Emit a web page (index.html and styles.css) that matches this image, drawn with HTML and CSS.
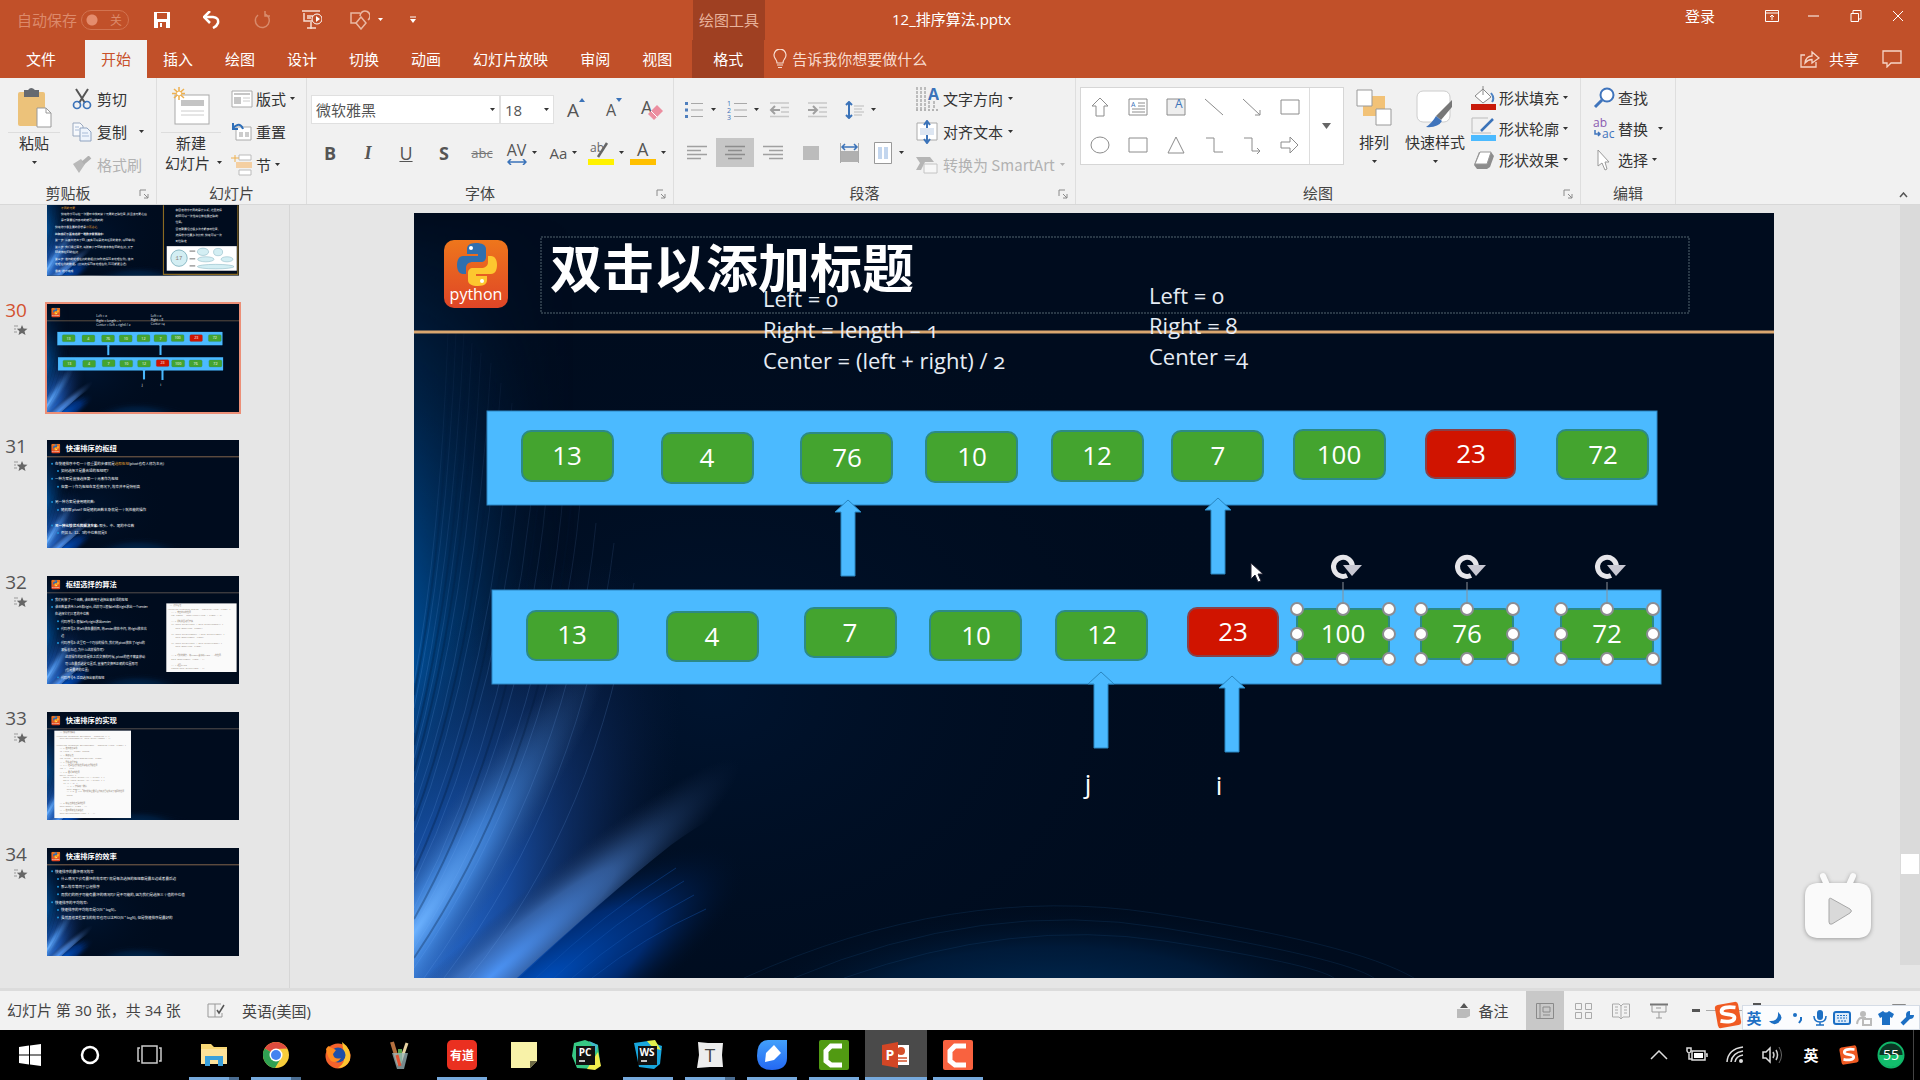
FILE: index.html
```html
<!DOCTYPE html>
<html lang="zh-CN">
<head>
<meta charset="utf-8">
<title>12_排序算法.pptx</title>
<link rel="stylesheet" href="styles.css">
</head>
<body>
<svg class="defs" width="0" height="0" aria-hidden="true">
  <defs>
    <linearGradient id="gLeft" x1="0" x2="1" y1="0" y2="0"><stop offset="0" stop-color="#00509a"/><stop offset=".35" stop-color="#003a74" stop-opacity=".75"/><stop offset="1" stop-color="#000d1f" stop-opacity="0"/></linearGradient>
    <linearGradient id="gFade" x1="0" x2="0" y1="0" y2="1"><stop offset="0" stop-color="#000"/><stop offset=".25" stop-color="#555"/><stop offset=".6" stop-color="#fff"/><stop offset="1" stop-color="#fff"/></linearGradient>
    <radialGradient id="gGlow" gradientUnits="userSpaceOnUse" cx="0" cy="0" r="1" gradientTransform="translate(0 765) rotate(-63) scale(460 185)"><stop offset="0" stop-color="#2c72da"/><stop offset=".35" stop-color="#1a50a8" stop-opacity=".9"/><stop offset=".7" stop-color="#10306a" stop-opacity=".5"/><stop offset="1" stop-color="#0a1c40" stop-opacity="0"/></radialGradient>
    <radialGradient id="gPale" gradientUnits="userSpaceOnUse" cx="0" cy="0" r="1" gradientTransform="translate(0 720) rotate(-56) scale(340 46)"><stop offset="0" stop-color="#6cb2ff"/><stop offset=".4" stop-color="#4a8ee0" stop-opacity=".7"/><stop offset="1" stop-color="#2c4c78" stop-opacity="0"/></radialGradient>
    <radialGradient id="gPale2" gradientUnits="userSpaceOnUse" cx="0" cy="0" r="1" gradientTransform="translate(75 765) rotate(-41) scale(330 44)"><stop offset="0" stop-color="#4c94f6"/><stop offset=".5" stop-color="#4374bd" stop-opacity=".7"/><stop offset="1" stop-color="#1c2f52" stop-opacity="0"/></radialGradient>
    <radialGradient id="gDeep" gradientUnits="userSpaceOnUse" cx="0" cy="0" r="1" gradientTransform="translate(120 775) rotate(-32) scale(250 75)"><stop offset="0" stop-color="#0052c4"/><stop offset=".55" stop-color="#00348a" stop-opacity=".75"/><stop offset="1" stop-color="#000d1f" stop-opacity="0"/></radialGradient>
    <radialGradient id="gArc" gradientUnits="userSpaceOnUse" cx="0" cy="0" r="1" gradientTransform="translate(640 800) scale(330 110)"><stop offset="0" stop-color="#00305c"/><stop offset=".6" stop-color="#002044" stop-opacity=".7"/><stop offset="1" stop-color="#000d1f" stop-opacity="0"/></radialGradient>
    <radialGradient id="gHaze" gradientUnits="userSpaceOnUse" cx="0" cy="0" r="1" gradientTransform="translate(300 480) scale(560 420)"><stop offset="0" stop-color="#001736" stop-opacity=".7"/><stop offset="1" stop-color="#000c1e" stop-opacity="0"/></radialGradient>
    <linearGradient id="gLogo" x1="0" x2="0" y1="0" y2="1"><stop offset="0" stop-color="#ee761c"/><stop offset="1" stop-color="#df4527"/></linearGradient>
    <linearGradient id="gBlue" x1="0" x2="0" y1="0" y2="1"><stop offset="0" stop-color="#42a0fb"/><stop offset="1" stop-color="#2468f2"/></linearGradient>
    <mask id="mFade"><rect width="400" height="765" fill="url(#gFade)"/></mask>
    <clipPath id="cAbove"><path d="M0 765H105Q190 685 257 632Q310 592 400 560V300H0Z"/></clipPath>
    <clipPath id="cBelow"><path d="M103 765Q190 685 257 632Q310 592 400 560V765Z"/></clipPath>
  </defs>

  <symbol id="slide-bg" viewBox="0 0 1360 765">
    <rect width="1360" height="765" fill="#000c1e"/>
    <rect width="1360" height="765" fill="url(#gHaze)"/>
    <rect width="160" height="765" fill="url(#gLeft)" mask="url(#mFade)"/>
    <g clip-path="url(#cAbove)">
      <rect width="700" height="765" fill="url(#gGlow)"/>
      <rect width="700" height="765" fill="url(#gPale)"/>
      <rect width="700" height="765" fill="url(#gPale2)"/>
    </g>
    <g clip-path="url(#cBelow)"><rect width="700" height="765" fill="url(#gDeep)"/></g>
    <rect y="640" width="1360" height="125" fill="url(#gArc)"/>
    <g fill="none" stroke="#7ab4ff" stroke-opacity=".16" mask="url(#mFade)">
      <path d="M0 470Q26 330 34 120M0 495Q32 350 42 120M0 520Q38 360 50 120M0 545Q46 380 58 130M0 570Q54 400 67 140M0 595Q62 420 77 150M0 620Q70 440 87 170M0 645Q80 465 98 190M0 670Q92 480 110 210M0 695Q104 500 122 230M0 715Q116 520 135 250M0 735Q130 535 150 270M0 755Q142 550 166 290M10 765Q158 560 182 310M30 765Q170 580 200 330M55 765Q185 605 220 370"/>
    </g>
    <g fill="none" stroke="#001634" stroke-opacity=".3" stroke-width="2" mask="url(#mFade)">
      <path d="M0 482Q29 340 38 120M0 532Q42 370 54 125M0 558Q50 390 62 135M0 608Q66 430 82 160M0 658Q86 470 104 200M0 706Q110 510 128 240M0 745Q136 542 158 280"/>
    </g>
    <g fill="none" stroke="#1458b4" stroke-opacity=".4"><path d="M122 765Q190 700 262 655M140 765Q200 708 270 668M158 765Q215 716 280 682M178 765Q230 724 292 696"/></g>
    <g fill="none" stroke="#1c5a90" stroke-opacity=".2"><path d="M330 765Q540 670 740 700T1000 765M380 765Q570 685 750 715T960 765M430 765Q600 705 750 728T920 765"/></g>
  </symbol>
  <symbol id="python" viewBox="0 0 64 68">
    <rect width="64" height="68" rx="10" fill="url(#gLogo)"/>
    <path d="M32 3c-7 0-9 3-9 6v5h11v2H19c-4 0-6 4-6 9s2 9 6 9h3v-6c0-4 3-6 7-6h8c3 0 5-2 5-5V9c0-4-4-6-10-6z" fill="#2f6fae"/>
    <path d="M34 46c7 0 9-3 9-6v-4H32v-2h15c4 0 6-4 6-9s-2-9-6-9h-3v6c0 4-3 6-7 6h-8c-3 0-5 2-5 5v7c0 4 4 6 10 6z" fill="#fdc72f"/>
    <circle cx="27" cy="8" r="2" fill="#fff"/><circle cx="38" cy="41" r="2" fill="#fff"/>
    <text x="32" y="60" class="logo-text">python</text>
  </symbol>
  <symbol id="arrow-up" viewBox="0 0 28 78" preserveAspectRatio="none"><path d="M14 1L27 13H21V77H7V13H1Z" fill="#4bbaff" stroke="#2a86c0"/></symbol>
  <symbol id="handles" viewBox="0 0 120 120">
    <path d="M60 34V64" stroke="#8a9098"/>
    <path d="M64 27.500A9.500 9.500 0 1 1 69.500 18" fill="none" stroke="#e6e6ea" stroke-width="5"/><path d="M60 17H79L69 28Z" fill="#c8c8d2"/>
    <g fill="#fff" stroke="#8d8d93" stroke-width="2"><circle cx="14" cy="61" r="6"/><circle cx="60" cy="61" r="6"/><circle cx="106" cy="61" r="6"/><circle cx="14" cy="86" r="6"/><circle cx="106" cy="86" r="6"/><circle cx="14" cy="111" r="6"/><circle cx="60" cy="111" r="6"/><circle cx="106" cy="111" r="6"/></g>
  </symbol>
  <symbol id="slide30" viewBox="0 0 1360 765">
    <use href="#slide-bg" width="1360" height="765"/>
    <use href="#python" x="30" y="27" width="64" height="68"/>
    <path d="M0 119H1360" stroke="#d9a66f" stroke-width="3"/>
    <g class="note">
      <text x="349" y="94">Left = 0</text><text x="349" y="125">Right = length – 1</text><text x="349" y="156">Center = (left + right) / 2</text>
      <text x="735" y="91">Left = 0</text><text x="735" y="121">Right = 8</text><text x="735" y="152">Center =4</text>
    </g>
    <g fill="#4bbaff" stroke="#2c86c4"><rect x="73" y="198" width="1170" height="94"/><rect x="78" y="377" width="1169" height="94"/></g>
    <g class="cell">
      <rect x="108" y="218" width="91" height="50" rx="9"/><rect x="248" y="220" width="91" height="50" rx="9"/><rect x="387" y="220" width="91" height="50" rx="9"/><rect x="512" y="219" width="91" height="50" rx="9"/><rect x="638" y="218" width="91" height="50" rx="9"/><rect x="758" y="218" width="91" height="50" rx="9"/><rect x="880" y="217" width="91" height="49" rx="9"/><rect class="hot" x="1012" y="217" width="89" height="48" rx="9"/><rect x="1143" y="217" width="91" height="49" rx="9"/>
      <rect x="113" y="398" width="91" height="49" rx="9"/><rect x="253" y="399" width="91" height="49" rx="9"/><rect x="391" y="395" width="91" height="49" rx="9"/><rect x="516" y="398" width="91" height="49" rx="9"/><rect x="642" y="398" width="91" height="49" rx="9"/><rect class="hot" x="774" y="395" width="90" height="48" rx="9"/><rect x="883" y="396" width="92" height="50" rx="9"/><rect x="1007" y="396" width="92" height="50" rx="9"/><rect x="1147" y="396" width="92" height="50" rx="9"/>
    </g>
    <g class="num">
      <text x="153" y="252">13</text><text x="293" y="254">4</text><text x="433" y="254">76</text><text x="558" y="253">10</text><text x="683" y="252">12</text><text x="804" y="252">7</text><text x="925" y="251">100</text><text x="1057" y="250">23</text><text x="1189" y="251">72</text>
      <text x="158" y="431">13</text><text x="298" y="433">4</text><text x="436" y="429">7</text><text x="562" y="432">10</text><text x="688" y="431">12</text><text x="819" y="428">23</text><text x="929" y="430">100</text><text x="1053" y="430">76</text><text x="1193" y="430">72</text>
      <text x="674" y="580">j</text><text x="805" y="582">i</text>
    </g>
    <use href="#arrow-up" x="420" y="286" width="28" height="78"/><use href="#arrow-up" x="790" y="284" width="28" height="78"/>
    <use href="#arrow-up" x="673" y="458" width="28" height="78"/><use href="#arrow-up" x="804" y="462" width="28" height="78"/>
  </symbol>

  <symbol id="caret" viewBox="0 0 7 4"><path d="M1 0H6L3.500 3Z" fill="currentColor"/></symbol>
  <symbol id="launch" viewBox="0 0 10 10"><path d="M1 7V1H7M5 5L9 9M9 5V9H5" fill="none" stroke="#8a8a8a"/></symbol>
  <symbol id="star" viewBox="0 0 14 12"><path d="M8 1L9.500 4.600L13.500 4.800L10.500 7.300L11.500 11L8 9L4.500 11L5.500 7.300L2.800 4.800L6.600 4.600Z" fill="#666"/><path d="M0 2H4M0 5H2M0 8H3" stroke="#999"/></symbol>
  <symbol id="sogou" viewBox="0 0 28 28"><rect x="3" y="3" width="22" height="22" rx="3" fill="#f05a22" transform="rotate(-10 14 14)"/><path d="M21 7C13 6 8 7 8 10.500C8 15 20 12 20 16.500C20 20 14 21 7 19.500" fill="none" stroke="#fff" stroke-width="3.500"/></symbol>
  <symbol id="lines" viewBox="0 0 20 16"><path d="M0 1.500H20M0 5.500H14M0 9.500H20M0 13.500H14" stroke="#a0a0a0" stroke-width="1.500"/></symbol>
</svg>

<div class="app">
<header class="top">
  <div class="titlebar">
    <label class="autosave">自动保存 <input type="checkbox" class="switch"><span class="off">关</span></label>
    <div class="qat">
      <button aria-label="保存"><svg width="18" height="18" viewBox="0 0 18 18"><path d="M1 1H17V17H1Z" fill="#fff"/><path d="M4 2H14V8H4ZM5 11H13V17H5Z" fill="#c15029"/><path d="M7 12H9V16H7Z" fill="#fff"/></svg></button>
      <button aria-label="撤消"><svg width="18" height="18" viewBox="0 0 18 18"><path d="M3 6H10Q16 6.500 15 12Q14 15 10 17" fill="none" stroke="#fff" stroke-width="2.500"/><path d="M7 0L1 6L7 12" fill="none" stroke="#fff" stroke-width="2.500"/></svg></button>
      <button aria-label="恢复"><svg width="18" height="18" viewBox="0 0 18 18"><path d="M12 3A7 7 0 1 1 5 4M12 0V5H17" fill="none" stroke="#d88a6b" stroke-width="1.500"/></svg></button>
      <button aria-label="从头开始"><svg width="20" height="20" viewBox="0 0 20 20"><path d="M0 1H18M2 3V11H10M9 12V19M5 18H14M5 6H11M5 8H9" fill="none" stroke="#f6ddd2" stroke-width="1.500"/><circle cx="15" cy="9" r="5" fill="#c15029" stroke="#fff"/><path d="M14 6L18 9L14 12Z" fill="#fff"/></svg></button>
      <button class="wide" aria-label="形状"><svg width="20" height="20" viewBox="0 0 20 20"><path d="M10 3H1V13H7M10 6A5 5 0 1 1 18 10" fill="none" stroke="#e9b8a3" stroke-width="1.500"/><path d="M11 7L16 13L11 19L6 13Z" fill="none" stroke="#e9b8a3" stroke-width="1.500"/></svg><svg width="7" height="4"><use href="#caret"/></svg></button>
      <button class="slim" aria-label="自定义快速访问工具栏"><svg width="8" height="8" viewBox="0 0 8 8"><path d="M1 1H7" stroke="#fff"/><path d="M1 3H7L4 7Z" fill="#fff"/></svg></button>
    </div>
    <div class="ctx-title">绘图工具</div>
    <h1 class="doc">12_排序算法.pptx</h1>
    <div class="winctl">
      <a href="#login" class="login">登录</a>
      <button aria-label="功能区显示选项"><svg width="14" height="12" viewBox="0 0 14 12"><path d="M.500 .500H13.500V11.500H.500ZM.500 3H13.500M7 10V5M5 7L7 5L9 7" fill="none" stroke="#fff"/></svg></button>
      <button aria-label="最小化"><svg width="12" height="12"><path d="M0 6H11" stroke="#fff"/></svg></button>
      <button aria-label="还原"><svg width="12" height="12" viewBox="0 0 12 12"><path d="M1 3.500H8.500V11.500H1ZM3 3V.500H11V9H9" fill="none" stroke="#fff"/></svg></button>
      <button aria-label="关闭"><svg width="12" height="12"><path d="M1 1L11 11M11 1L1 11" stroke="#fff"/></svg></button>
    </div>
  </div>
  <nav class="tabs">
    <button class="file">文件</button><button class="active">开始</button><button>插入</button><button>绘图</button><button>设计</button><button>切换</button><button>动画</button><button>幻灯片放映</button><button>审阅</button><button>视图</button><button class="ctx">格式</button>
    <button class="tell"><svg width="14" height="20" viewBox="0 0 14 20"><path d="M4 14Q4 12 2.500 10A6 6 0 1 1 11.500 10Q10 12 10 14ZM4 16H10M5 18.500H9" fill="none" stroke="#f8dcd0" stroke-width="1.200"/></svg>告诉我你想要做什么</button>
    <button class="share"><svg width="20" height="18" viewBox="0 0 20 18"><path d="M5 5H1V17H16V12M5 13Q6 6 12 6V2L19 8L12 13V9.500Q8 9.500 5 13Z" fill="none" stroke="#f6d5c7" stroke-width="1.300"/></svg>共享</button>
    <button class="comment" aria-label="批注"><svg width="20" height="18" viewBox="0 0 20 18"><path d="M1 1H19V13H9L5 17V13H1Z" fill="none" stroke="#f6d5c7" stroke-width="1.300"/></svg></button>
  </nav>
</header>

<section class="ribbon">
  <div class="group g-clip">
    <div class="body">
      <button class="big"><svg width="36" height="42" viewBox="0 0 36 42"><rect x="2" y="5" width="27" height="34" rx="2" fill="#ecc27a"/><path d="M8 3H12Q15 -1 19 3H23V10H8Z" fill="#666a70"/><path d="M21 21H30L35 26V40H21Z" fill="#fff" stroke="#999"/><path d="M30 21V26H35" fill="none" stroke="#999"/></svg><span class="split">粘贴</span><svg width="7" height="4"><use href="#caret"/></svg></button>
      <div class="col">
        <button><svg width="20" height="22" viewBox="0 0 20 22"><path d="M4 1L13 15M16 1L7 15" stroke="#555" stroke-width="2"/><circle cx="5" cy="17" r="3.500" fill="none" stroke="#3b73b9" stroke-width="1.700"/><circle cx="15" cy="17" r="3.500" fill="none" stroke="#3b73b9" stroke-width="1.700"/></svg>剪切</button>
        <button><svg width="20" height="20" viewBox="0 0 20 20"><path d="M1 1H8L11 4V14H1Z" fill="#f7f9fc" stroke="#9aa9bf"/><path d="M8 6H15L19 10V19H8Z" fill="#eef4fc" stroke="#8fa3c0"/><path d="M10 11H16M10 14H17M3 5H7M3 8H7" stroke="#a9bcd8"/></svg>复制<svg class="far" width="7" height="4"><use href="#caret"/></svg></button>
        <button class="dim" disabled><svg width="20" height="18" viewBox="0 0 20 18"><path d="M1 8L9 3L13 8L7 17Z" fill="#b9b9b9"/><path d="M11 7L18 1" stroke="#b0b0b0" stroke-width="4"/></svg>格式刷</button>
      </div>
    </div>
    <div class="cap">剪贴板<svg class="launch" width="10" height="10"><use href="#launch"/></svg></div>
  </div>

  <div class="group g-slides">
    <div class="body">
      <button class="big"><svg width="38" height="42" viewBox="0 0 38 42"><rect x="3" y="8" width="34" height="29" fill="#fff" stroke="#aaa"/><path d="M9 13H32V19H9Z" fill="#c4c4c4"/><path d="M9 24H32M9 28H32" stroke="#ccc"/><path d="M7 0V13M0 6.500H13M2 2L12 11M12 2L2 11" stroke="#eeb04e" stroke-width="1.500"/><circle cx="7" cy="6.500" r="2.500" fill="#fff" stroke="#eeb04e"/></svg><span class="split">新建</span><span class="two">幻灯片<svg width="7" height="4"><use href="#caret"/></svg></span></button>
      <div class="col">
        <button><svg width="22" height="18" viewBox="0 0 22 18"><path d="M1 1H21V17H1Z" fill="#fff" stroke="#aaa"/><path d="M3 3H19V5H3ZM3 7H10V14H3Z" fill="#c6c6c6"/><path d="M12 8H19M12 11H19" stroke="#ccc"/></svg>版式<svg width="7" height="4"><use href="#caret"/></svg></button>
        <button><svg width="22" height="20" viewBox="0 0 22 20"><path d="M5 5H20V18H5Z" fill="#fff" stroke="#aaa"/><path d="M8 10H12V15H8ZM14 10H18V15H14Z" fill="#ccc"/><path d="M2 6Q9 -1 12 7M2 1V7H7" fill="none" stroke="#2f6fb8" stroke-width="2"/></svg>重置</button>
        <button><svg width="22" height="22" viewBox="0 0 22 22"><path d="M8 1H20V6H8ZM8 16H20V21H8Z" fill="#fff" stroke="#bbb"/><path d="M5 8H21V14H5Z" fill="#f4cfa2"/><path d="M0 4H8M4 1V8" stroke="#eeb04e"/></svg>节<svg width="7" height="4"><use href="#caret"/></svg></button>
      </div>
    </div>
    <div class="cap">幻灯片</div>
  </div>

  <div class="group g-font">
    <div class="tools">
      <div class="line">
        <div class="combo name"><select aria-label="字体"><option>微软雅黑</option></select><svg width="7" height="4"><use href="#caret"/></svg></div>
        <div class="combo size"><select aria-label="字号"><option>18</option></select><svg width="7" height="4"><use href="#caret"/></svg></div>
        <button class="c38 glyph">A<svg width="6" height="4" viewBox="0 0 6 4"><path d="M0 4L3 0L6 4Z" fill="#3b73b9"/></svg></button>
        <button class="c38 glyph small">A<svg width="6" height="4" viewBox="0 0 6 4"><path d="M0 0L3 4L6 0Z" fill="#3b73b9"/></svg></button>
        <button class="c38" aria-label="清除格式"><svg width="24" height="24" viewBox="0 0 24 24"><text x="1" y="16" class="bigA">A</text><path d="M17 7L23 13L14 22L8 16Z" fill="#ec8ea0"/><path d="M11 13L17 19" stroke="#fff"/></svg></button>
      </div>
      <div class="line">
        <button class="c38 f-b">B</button><button class="c38 f-i">I</button><button class="c38 f-u">U</button><button class="c38 f-s">S</button><button class="c38 f-abc">abc</button>
        <button class="c42 f-av"><span>AV<svg width="20" height="6" viewBox="0 0 20 6"><path d="M1 3H19M4 0L1 3L4 6M16 0L19 3L16 6" fill="none" stroke="#3b73b9" stroke-width="1.500"/></svg></span><svg width="7" height="4"><use href="#caret"/></svg></button>
        <button class="c42 f-aa"><span>Aa</span><svg width="7" height="4"><use href="#caret"/></svg></button>
        <button class="c42"><svg width="26" height="26" viewBox="0 0 26 26"><text x="2" y="12" class="mini">ab</text><path d="M19 3L10 17" stroke="#666" stroke-width="2.500"/><path d="M0 19H26V25H0Z" fill="#fff200"/></svg><svg width="7" height="4"><use href="#caret"/></svg></button>
        <button class="c42"><svg width="26" height="26" viewBox="0 0 26 26"><text x="7" y="16" class="bigA">A</text><path d="M0 19H26V25H0Z" fill="#ffc000"/></svg><svg width="7" height="4"><use href="#caret"/></svg></button>
      </div>
    </div>
    <div class="cap">字体<svg class="launch" width="10" height="10"><use href="#launch"/></svg></div>
  </div>

  <div class="group g-para">
    <div class="body">
      <div class="tools">
        <div class="line pad">
          <button class="c42 left" aria-label="项目符号"><svg width="19" height="18" viewBox="0 0 19 18"><path d="M0 1H3V4H0ZM0 7.500H3V10.500H0ZM0 14H3V17H0Z" fill="#4f7fbd"/><path d="M6 2.500H18M6 9H18M6 15.500H18" stroke="#a8a8a8"/></svg><svg width="7" height="4"><use href="#caret"/></svg></button>
          <button class="c42 left" aria-label="编号"><svg width="20" height="20" viewBox="0 0 20 20"><text x="0" y="6" class="tiny">1</text><text x="0" y="13" class="tiny">2</text><text x="0" y="20" class="tiny">3</text><path d="M7 3.500H20M7 10H20M7 16.500H20" stroke="#a8a8a8"/></svg><svg width="7" height="4"><use href="#caret"/></svg></button>
          <button class="c38 left" aria-label="减少缩进"><svg width="21" height="16" viewBox="0 0 21 16"><path d="M1 1H20M12 5.500H20M12 10H20M1 14.500H20" stroke="#c8c8c8" stroke-width="1.500"/><path d="M11 8H3M6 4L2 8L6 12" fill="none" stroke="#a0a0a0" stroke-width="2"/></svg></button>
          <button class="c38 left" aria-label="增加缩进"><svg width="21" height="16" viewBox="0 0 21 16"><path d="M1 1H20M12 5.500H20M12 10H20M1 14.500H20" stroke="#c8c8c8" stroke-width="1.500"/><path d="M1 8H9M6 4L10 8L6 12" fill="none" stroke="#a0a0a0" stroke-width="2"/></svg></button>
          <button class="c38 left" aria-label="行距"><svg width="19" height="18" viewBox="0 0 19 18"><path d="M4 1V17M1 4L4 1L7 4M1 14L4 17L7 14" fill="none" stroke="#3b73b9" stroke-width="2"/><path d="M9 5H19M9 8H17M9 11H19M9 14H17" stroke="#bbb"/></svg><svg width="7" height="4"><use href="#caret"/></svg></button>
        </div>
        <div class="line">
          <button class="c38" aria-label="左对齐"><svg width="20" height="16"><use href="#lines"/></svg></button>
          <button class="c38 on" aria-label="居中"><svg width="20" height="16" viewBox="0 0 20 16"><path d="M0 1.500H20M3 5.500H17M0 9.500H20M3 13.500H17" stroke="#8c8c8c" stroke-width="1.500"/></svg></button>
          <button class="c38" aria-label="右对齐"><svg width="20" height="16" viewBox="0 0 20 16"><path d="M0 1.500H20M6 5.500H20M0 9.500H20M6 13.500H20" stroke="#a0a0a0" stroke-width="1.500"/></svg></button>
          <button class="c38" aria-label="两端对齐"><svg width="16" height="14" viewBox="0 0 16 14"><path d="M0 1H16M0 4H16M0 7H16M0 10H16M0 13H16" stroke="#bcbcbc" stroke-width="3"/></svg></button>
          <button class="c38" aria-label="分散对齐"><svg width="19" height="20" viewBox="0 0 19 20"><path d="M1 8H18V19H1Z" fill="#b0b0b0"/><path d="M.500 0V20M18.500 0V20" stroke="#aaa"/><path d="M2 4H17M5 1L2 4L5 7M14 1L17 4L14 7" fill="none" stroke="#3b73b9" stroke-width="1.500"/></svg></button>
          <button class="c38 cols" aria-label="分栏"><svg width="18" height="22" viewBox="0 0 18 22"><path d="M.500 .500H17.500V21.500H.500Z" fill="#fff" stroke="#999"/><path d="M4 5H8V17H4ZM10 5H14V17H10Z" fill="#c3d6ee"/></svg><svg width="7" height="4"><use href="#caret"/></svg></button>
        </div>
      </div>
      <div class="col">
        <button><svg width="23" height="24" viewBox="0 0 23 24"><path d="M1 0V22M5 0V22M9 0V22M13 14V22M18 14V22" stroke="#888" stroke-dasharray="3 1"/><text x="12" y="13" class="blueA">A</text><path d="M0 23H23" stroke="#777" stroke-dasharray="2 2"/></svg>文字方向<svg width="7" height="4"><use href="#caret"/></svg></button>
        <button><svg width="23" height="24" viewBox="0 0 23 24"><path d="M1 3H21V20H1Z" fill="#fff" stroke="#aaa"/><path d="M4 8H18V15H4Z" fill="#dde6f2"/><path d="M11 1V8M11 15V23M8 5L11 1L14 5M8 19L11 23L14 19" fill="none" stroke="#3b73b9" stroke-width="2"/></svg>对齐文本<svg width="7" height="4"><use href="#caret"/></svg></button>
        <button class="dim" disabled><svg width="23" height="18" viewBox="0 0 23 18"><path d="M0 1H14L18 6H9L5 14H0L4 7Z" fill="#b5b5b5"/><path d="M8 8H21V17H8Z" fill="#f7f7f7" stroke="#c4c4c4"/></svg>转换为 SmartArt<svg width="7" height="4"><use href="#caret"/></svg></button>
      </div>
    </div>
    <div class="cap">段落<svg class="launch" width="10" height="10"><use href="#launch"/></svg></div>
  </div>

  <div class="group g-draw">
    <div class="body">
      <div class="gallery">
        <div class="shapes">
          <svg width="20" height="20" viewBox="0 0 20 20"><path d="M10 1L18 9H14V19H6V9H2Z"/></svg>
          <svg width="20" height="20" viewBox="0 0 20 20"><path d="M1 2H19V18H1Z"/><path d="M10 6H17M10 9H17M4 12H17M4 15H17"/><text x="3" y="10" class="tinyA">A</text></svg>
          <svg width="20" height="20" viewBox="0 0 20 20"><path d="M1 2H19V18H1Z" fill="#eee"/><text x="9" y="11" class="midA">A</text></svg>
          <svg width="20" height="20" viewBox="0 0 20 20"><path d="M1 2L19 18"/></svg>
          <svg width="20" height="20" viewBox="0 0 20 20"><path d="M1 2L18 18M18 13V18H13"/></svg>
          <svg width="20" height="20" viewBox="0 0 20 20"><path d="M1 3H19V17H1Z"/></svg>
          <svg width="20" height="20" viewBox="0 0 20 20"><ellipse cx="10" cy="10" rx="9" ry="8"/></svg>
          <svg width="20" height="20" viewBox="0 0 20 20"><path d="M1 3H19V17H1Z"/></svg>
          <svg width="20" height="20" viewBox="0 0 20 20"><path d="M10 2L18 18H2Z"/></svg>
          <svg width="20" height="20" viewBox="0 0 20 20"><path d="M2 3H10V17H19"/></svg>
          <svg width="20" height="20" viewBox="0 0 20 20"><path d="M2 3H10V16H18M15 13L18 16L15 19"/></svg>
          <svg width="20" height="20" viewBox="0 0 20 20"><path d="M1 7H10V2L18 10L10 18V13H1Z"/></svg>
        </div>
        <button class="more" aria-label="更多形状"><svg width="9" height="6" viewBox="0 0 9 6"><path d="M0 0H9L4.500 6Z" fill="#666"/></svg></button>
      </div>
      <button class="big arrange"><svg width="36" height="42" viewBox="0 0 36 42"><path d="M7 9H29V29H7Z" fill="#f2c277"/><path d="M1 3H16V19H1ZM20 22H35V38H20Z" fill="#fff" stroke="#999"/></svg><span>排列</span><svg width="7" height="4"><use href="#caret"/></svg></button>
      <button class="big quick"><svg width="38" height="42" viewBox="0 0 38 42"><rect x="1" y="4" width="33" height="31" rx="6" fill="#fff" stroke="#ccc"/><path d="M36 13V20L25 33L20 29Z" fill="#777"/><path d="M20 29L26 34Q22 41 10 40Q16 36 20 29Z" fill="#3f74bc"/></svg><span>快速样式</span><svg width="7" height="4"><use href="#caret"/></svg></button>
      <div class="col tight">
        <button><svg width="25" height="24" viewBox="0 0 25 24"><path d="M4 10L12 3L20 11L12 17Z" fill="#fff" stroke="#888"/><path d="M12 0V9" stroke="#888"/><path d="M20 7Q24 12 21 16" stroke="#4b82c4" stroke-width="2" fill="none"/><path d="M0 18H25V24H0Z" fill="#c81a0a"/></svg>形状填充<svg width="7" height="4"><use href="#caret"/></svg></button>
        <button><svg width="25" height="24" viewBox="0 0 25 24"><path d="M1 1H17M1 1V16H20" fill="none" stroke="#bbb"/><path d="M22 2L10 14" stroke="#3b73b9" stroke-width="2.500"/><path d="M0 18H25V24H0Z" fill="#4bbaff"/></svg>形状轮廓<svg width="7" height="4"><use href="#caret"/></svg></button>
        <button><svg width="25" height="20" viewBox="0 0 25 20"><path d="M8 2H20L23 6L19 17L16 19H6L3 15Z" fill="#8d8d8d"/><path d="M9 2H20L16 14H4Z" fill="#fff" stroke="#999"/></svg>形状效果<svg width="7" height="4"><use href="#caret"/></svg></button>
      </div>
    </div>
    <div class="cap">绘图<svg class="launch" width="10" height="10"><use href="#launch"/></svg></div>
  </div>

  <div class="group g-edit">
    <div class="body">
      <div class="col tight">
        <button><svg width="22" height="22" viewBox="0 0 22 22"><circle cx="14" cy="8" r="6.500" fill="#fff" stroke="#3f74bc" stroke-width="2"/><path d="M9 13L2 20" stroke="#3f74bc" stroke-width="3"/></svg>查找</button>
        <button><svg width="22" height="22" viewBox="0 0 22 22"><text x="0" y="9" class="ab">ab</text><text x="9" y="20" class="ac">ac</text><path d="M2 12V16H7M5 14L7 16L5 18" fill="none" stroke="#3f74bc" stroke-width="1.500"/></svg>替换<svg class="far" width="7" height="4"><use href="#caret"/></svg></button>
        <button><svg width="22" height="22" viewBox="0 0 22 22"><path d="M5 1V17L9 14L12 21L14 20L12 13H16Z" fill="#fff" stroke="#999"/></svg>选择<svg width="7" height="4"><use href="#caret"/></svg></button>
      </div>
    </div>
    <div class="cap">编辑</div>
  </div>
  <button class="collapse" aria-label="折叠功能区"><svg width="9" height="6" viewBox="0 0 9 6"><path d="M1 5L4.500 1L8 5" fill="none" stroke="#555" stroke-width="1.500"/></svg></button>
</section>

<main class="work">
  <ol class="thumbs">
    <li class="clipped"><span class="no"></span>
      <svg class="thumb tail" viewBox="0 265 1360 500"><svg width="1360" height="765"><use href="#slide-bg"/></svg>
        <path d="M825 265V755H1352V265" fill="none" stroke="#8a6a22" stroke-width="8"/>
        <g class="tb s20"><text x="99" y="292" class="gold">不同的元素</text><text x="99" y="338">快速排序可以在一次循环中找到某个元素的正确位置, 并且该元素之后</text><text x="99" y="376">是不需要任何移动的就可以找到的</text><text x="57" y="425">快速排序最重要的思想是<tspan class="gold">分而治之</tspan></text><text x="57" y="473" class="bold">比如我们下面有这样一堆数字需要排序:</text><text x="57" y="520">第一步: 从其中选出了65, (其实可以是选出任意的数字, 以65举例)</text><text x="57" y="565">第二步: 我们通过算法, 将所有小于65的数字放在65的左边, 大于</text><text x="57" y="607">65的放在65的右边</text><text x="57" y="652">第三步: 递归的处理左边的数据(比如你选择31来处理左侧), 递归</text><text x="57" y="692">处理右侧的数据。(比如选择75来处理右侧, 81可能更合适)</text><text x="57" y="735">最终: 排序完成</text>
        <text x="910" y="306">和冒泡排序不同的是什么呢, 这里选择</text><text x="910" y="346">的65可以一次性将它放在最正确的</text><text x="910" y="390">位置。</text><text x="910" y="440">冒泡需要经过很多次才能移动位置,</text><text x="910" y="482">选择排序也要多次比较, 快速可以一次</text><text x="910" y="524">到位确定</text></g>
        <rect x="848" y="555" width="496" height="174" fill="#fff"/><circle cx="935" cy="640" r="58" fill="#d3eef3" stroke="#7db0bd" stroke-width="6"/><text x="935" y="652" class="code mid">17</text><g fill="#d3eef3" stroke="#8bb8c4" stroke-width="4"><ellipse cx="1105" cy="595" rx="40" ry="26"/><ellipse cx="1212" cy="597" rx="32" ry="26"/><ellipse cx="1125" cy="648" rx="58" ry="18"/><ellipse cx="1275" cy="648" rx="42" ry="18"/><ellipse cx="1195" cy="700" rx="130" ry="16"/></g><path d="M1010 590H1050M1010 645H1050M1010 695H1050" stroke="#555" stroke-width="6"/>
      </svg></li>
    <li class="sel"><span class="no">30<svg width="14" height="12"><use href="#star"/></svg></span><svg class="thumb" viewBox="0 0 1360 765"><use href="#slide30"/></svg></li>
    <li><span class="no">31<svg width="14" height="12"><use href="#star"/></svg></span>
      <svg class="thumb" viewBox="0 0 1360 765"><use href="#slide-bg"/><use href="#python" x="30" y="27" width="64" height="68"/><path d="M0 119H1360" stroke="#b98c60" stroke-width="5"/><text x="132" y="76" class="tt">快速排序的枢纽</text>
      <g class="tb"><text x="57" y="178">在快速排序中有一个很重要的步骤就是<tspan class="gold">选取枢纽</tspan>(pivot也有人称为主元)</text><text x="99" y="230">如何选择才是最合适的枢纽呢?</text><text x="57" y="284">一种方案是直接选择第一个元素作为枢纽</text><text x="99" y="341">但第一个作为枢纽在某些情况下, 效率并不是特别高</text><text x="57" y="449">另一种方案是使用随机数:</text><text x="99" y="506">随机取 pivot? 但是随机函数本身就是一个耗性能的操作</text><text x="57" y="615"><tspan class="bold">另一种比较优秀的解决方案:</tspan> 取头、中、尾的中位数</text><text x="99" y="669">例如 8、12、3的中位数就是8</text></g>
      <g fill="#1d93d8"><circle cx="36" cy="168" r="7"/><circle cx="78" cy="220" r="7"/><circle cx="36" cy="274" r="7"/><circle cx="78" cy="331" r="7"/><circle cx="36" cy="439" r="7"/><circle cx="78" cy="496" r="7"/><circle cx="36" cy="605" r="7"/><circle cx="78" cy="659" r="7"/></g></svg></li>
    <li><span class="no">32<svg width="14" height="12"><use href="#star"/></svg></span>
      <svg class="thumb" viewBox="0 0 1360 765"><use href="#slide-bg"/><use href="#python" x="30" y="27" width="64" height="68"/><path d="M0 119H1360" stroke="#77695f" stroke-width="5"/><text x="132" y="76" class="tt">枢纽选择的算法</text>
      <g class="tb s22"><text x="57" y="178">我们封装了一个函数, 该函数用于选择出来合适的枢纽</text><text x="57" y="230">该函数要求传入left和right, 这样可以根据left和right求出一个center</text><text x="57" y="274">在选择它们三者的中位数</text><text x="99" y="331">代码序号1: 根据left/right求出center</text><text x="99" y="383">代码序号2: 将left放在最前面, 将center放在中间, 将right放在右</text><text x="99" y="432">边</text><text x="99" y="485">代码序号3: 这里有一个巧妙的操作, 我们将pivot放在了right的</text><text x="99" y="532">紧挨着左边, 为什么这样操作呢?</text><text x="128" y="584">这样操作的好处是在之后交换的时候, pivot的值不需要移动</text><text x="128" y="631">可以在最后选定位置后, 直接再交换到正确的位置即可</text><text x="128" y="676">(也是最终的位置)</text><text x="99" y="728">代码序号4: 返回选择出来的枢纽</text></g>
      <g fill="#1d93d8"><circle cx="36" cy="168" r="7"/><circle cx="36" cy="220" r="7"/><circle cx="78" cy="321" r="7"/><circle cx="78" cy="373" r="7"/><circle cx="78" cy="475" r="7"/><circle cx="78" cy="718" r="7"/></g>
      <rect x="845" y="194" width="498" height="486" fill="#fafafa"/><g class="code"><text x="870" y="215">// 选择枢纽</text><text x="855" y="240">ArrayList.prototype.median = function (left, right) {</text><text x="880" y="262">// 1.求出中间的位置</text><text x="880" y="284">var center = Math.floor((left + right) / 2)</text><text x="880" y="328">// 2.判断并且进行交换</text><text x="880" y="350">if (this.array[left] &gt; this.array[center]) {</text><text x="910" y="372">this.swap(left, center)</text><text x="880" y="416">if (this.array[center] &gt; this.array[right]) {</text><text x="910" y="438">this.swap(center, right)</text><text x="880" y="482">if (this.array[left] &gt; this.array[right]) {</text><text x="910" y="504">this.swap(left, right)</text><text x="880" y="570">// 3.巧妙的操作: 将center移动到right - 1的位置.</text><text x="880" y="592">this.swap(center, right - 1)</text><text x="880" y="636">// 4.返回pivot</text><text x="880" y="658">return this.array[right - 1]</text></g></svg></li>
    <li><span class="no">33<svg width="14" height="12"><use href="#star"/></svg></span>
      <svg class="thumb" viewBox="0 0 1360 765"><use href="#slide-bg"/><use href="#python" x="30" y="27" width="64" height="68"/><path d="M0 119H1360" stroke="#77695f" stroke-width="5"/><text x="132" y="76" class="tt">快速排序的实现</text>
      <rect x="52" y="132" width="543" height="619" fill="#fafafa"/><g class="code"><text x="90" y="152">// 快速排序实现</text><text x="66" y="174">ArrayList.prototype.quickSort = function () {</text><text x="90" y="194">this.quickSortRec(0, this.array.length - 1)</text><text x="66" y="238">ArrayList.prototype.quickSortRec = function (left, right) {</text><text x="90" y="260">// 0.递归结束条件</text><text x="90" y="280">if (left &gt;= right) return</text><text x="90" y="310">// 1.获取枢纽</text><text x="90" y="330">var pivot = this.median(left, right)</text><text x="90" y="362">// 2.开始进行交换</text><text x="90" y="382">// 2.1.记录左边开始位置和右边开始位置</text><text x="90" y="402">var i = left</text><text x="90" y="430">// 2.3.循环查找位置</text><text x="90" y="450">while (true) {</text><text x="115" y="470">while (this.array[++i] &lt; pivot) { }</text><text x="115" y="490">while (this.array[--j] &gt; pivot) { }</text><text x="115" y="510">if (i &lt; j) {</text><text x="140" y="530">// 2.4.交换两个数值</text><text x="140" y="550">this.swap(i, j)</text><text x="140" y="570">// 2.5.当 i&lt;j 的时候停止循环因为两边已经找到了相同的位置</text><text x="140" y="592">break</text><text x="90" y="652">// 3.将枢纽放在正确的位置</text><text x="90" y="674">this.swap(i, right - 1)</text><text x="90" y="704">// 4.递归调用左边和右边</text><text x="90" y="724">this.quickSortRec(left, i - 1)</text></g></svg></li>
    <li><span class="no">34<svg width="14" height="12"><use href="#star"/></svg></span>
      <svg class="thumb" viewBox="0 0 1360 765"><use href="#slide-bg"/><use href="#python" x="30" y="27" width="64" height="68"/><path d="M0 119H1360" stroke="#b98c60" stroke-width="5"/><text x="132" y="76" class="tt">快速排序的效率</text>
      <g class="tb"><text x="57" y="175">快速排序的最坏情况效率</text><text x="99" y="230">什么情况下会有最坏的效率呢? 就是每次选择的枢纽都是最左边或者最后边</text><text x="99" y="284">那么效率等同于冒泡排序</text><text x="99" y="338">而我们的例子可能有最坏的情况吗? 是不可能的, 因为我们是选择三个值的中位值</text><text x="57" y="395">快速排序的平均效率:</text><text x="99" y="449">快速排序的平均效率是O(N * logN)。</text><text x="99" y="503">虽然其他某些算法的效率也可以达到O(N * logN), 但是快速排序是最好的</text></g>
      <g fill="#1d93d8"><circle cx="36" cy="165" r="7"/><circle cx="78" cy="220" r="7"/><circle cx="78" cy="274" r="7"/><circle cx="78" cy="328" r="7"/><circle cx="36" cy="385" r="7"/><circle cx="78" cy="439" r="7"/><circle cx="78" cy="493" r="7"/></g></svg></li>
  </ol>
  <div class="stage">
    <svg class="slide" viewBox="0 0 1360 765" role="img" aria-label="幻灯片 30">
      <use href="#slide30" width="1360" height="765"/>
      <rect x="127" y="24" width="1148" height="76" fill="none" stroke="#52646f" stroke-dasharray="2 1"/>
      <text x="136" y="75" class="tt">双击以添加标题</text>
      <use href="#handles" x="869" y="335" width="120" height="120"/><use href="#handles" x="993" y="335" width="120" height="120"/><use href="#handles" x="1133" y="335" width="120" height="120"/>
      <path d="M837 350V366L841 362L844 369L847 368L844 361H849Z" fill="#fff" stroke="#223"/>
    </svg>
  </div>
  <div class="scroll"><div class="grip"></div></div>
</main>

<footer class="status">
  <span class="count">幻灯片 第 30 张，共 34 张</span>
  <button aria-label="拼写检查"><svg width="18" height="16" viewBox="0 0 18 16"><path d="M1 1H8V14H1ZM8 1H14M8 14H15V10" fill="none" stroke="#999"/><path d="M10 7L12 10L17 2" fill="none" stroke="#555" stroke-width="1.500"/></svg></button>
  <button class="lang">英语(美国)</button>
  <button class="notes"><svg width="14" height="16" viewBox="0 0 14 16"><path d="M3 5L7 0L11 5Z" fill="#555"/><path d="M0 6H13V13L9 15H0Z" fill="#bbb"/></svg>备注</button>
  <button class="view cur" aria-label="普通视图"><svg width="18" height="16" viewBox="0 0 18 16"><path d="M.500 .500H17.500V15.500H.500ZM4 .500V15.500M7 4H14V9H7ZM7 12H14" fill="none" stroke="#8a8a8a"/></svg></button>
  <button class="view" aria-label="幻灯片浏览"><svg width="17" height="16" viewBox="0 0 17 16"><path d="M.500 .500H6.500V6.500H.500ZM10.500 .500H16.500V6.500H10.500ZM.500 9.500H6.500V15.500H.500ZM10.500 9.500H16.500V15.500H10.500Z" fill="none" stroke="#aaa"/></svg></button>
  <button class="view" aria-label="阅读视图"><svg width="18" height="16" viewBox="0 0 18 16"><path d="M.500 1H7L9 3L11 1H17.500V14H11L9 16L7 14H.500ZM9 3V15M3 4H6M3 7H6M3 10H6M12 4H15M12 7H15M12 10H15" fill="none" stroke="#aaa"/></svg></button>
  <button class="view" aria-label="幻灯片放映"><svg width="18" height="16" viewBox="0 0 18 16"><path d="M0 1.500H18" stroke="#777" stroke-width="2"/><path d="M2 2V9H16V2M9 9V15M6 15H12M6 5H11" fill="none" stroke="#999"/></svg></button>
  <button class="minus" aria-label="缩小"><svg width="8" height="3"><path d="M0 1.500H8" stroke="#555" stroke-width="3"/></svg></button>
  <input type="range" class="zoom" min="0" max="100" value="50" aria-label="缩放">
  <button class="pct">95%</button>
  <button class="fit" aria-label="适应窗口"><svg width="14" height="16" viewBox="0 0 14 16"><path d="M.500 1.500H13.500V14.500H.500ZM7 2V6M7 10V14" fill="none" stroke="#888"/></svg></button>
</footer>

<footer class="taskbar">
  <button class="sys" aria-label="开始"><svg width="22" height="22" viewBox="0 0 22 22"><path d="M0 3L10 1.500V10.500H0ZM11 1.400L22 0V10.500H11ZM0 11.500H10V20.500L0 19ZM11 11.500H22V22L11 20.600Z" fill="#fff"/></svg></button>
  <button class="sys" aria-label="Cortana"><svg width="20" height="20"><circle cx="10" cy="10" r="8" fill="none" stroke="#fff" stroke-width="2.500"/></svg></button>
  <button class="sys" aria-label="任务视图"><svg width="26" height="20" viewBox="0 0 26 20"><path d="M5 1H20V18H5ZM3 3H1V16H3M22 3H24V16H22" fill="none" stroke="#ccc" stroke-width="1.500"/></svg></button>
  <div class="apps">
    <button class="run more2" aria-label="文件资源管理器"><svg width="28" height="26" viewBox="0 0 28 26"><path d="M1 2H11L14 5H27V22H1Z" fill="#f8d775"/><path d="M1 7H27V22H1Z" fill="#fde29a"/><path d="M5 24V14H23V24H18V18H10V24Z" fill="#3aa0dc"/></svg></button>
    <button class="run more2" aria-label="Chrome"><svg width="28" height="28" viewBox="0 0 28 28"><circle cx="14" cy="14" r="13" fill="#f8cd3a"/><path d="M14 14L2.700 7.500A13 13 0 0 1 25.300 7.500L14 8Z" fill="#dd4b3e"/><path d="M14 14L2.700 7.500A13 13 0 0 0 13 27L19 17Z" fill="#30a152"/><circle cx="14" cy="14" r="6.500" fill="#fff"/><circle cx="14" cy="14" r="5" fill="#4483f0"/></svg></button>
    <button aria-label="Firefox"><svg width="28" height="28" viewBox="0 0 28 28"><circle cx="14" cy="15" r="12.500" fill="#f4622c"/><path d="M18 1Q28 8 26 19Q22 27 14 27Q22 22 20 13Z" fill="#fdc530"/><circle cx="14" cy="14" r="7.500" fill="#1d4fa8"/><path d="M2 8Q5 3 6 6L12 9L9 13Q10 19 17 17Q13 23 7 20Q3 15 2 8Z" fill="#ff8b1f"/></svg></button>
    <button aria-label="画笔"><svg width="22" height="28" viewBox="0 0 22 28"><path d="M3 1L10 24" stroke="#b5703f" stroke-width="4"/><path d="M18 2L11 22" stroke="#e8d3a2" stroke-width="3"/><path d="M11 8V22" stroke="#58a14b" stroke-width="4"/><path d="M3 12H19L15 28H8Z" fill="#9db8bc" opacity=".75"/><path d="M8 14L11 25" stroke="#e25232" stroke-width="3"/></svg></button>
    <button class="run" aria-label="有道"><svg width="30" height="30" viewBox="0 0 30 30"><rect width="30" height="30" rx="5" fill="#ea3020"/><text x="15" y="20" class="yd">有道</text></svg></button>
    <button aria-label="便笺"><svg width="26" height="26" viewBox="0 0 26 26"><path d="M0 0H26V19L19 26H0Z" fill="#f8f2a8"/><path d="M26 19H19V26Z" fill="#6e6a45"/></svg></button>
    <button aria-label="PyCharm"><svg width="30" height="30" viewBox="0 0 30 30"><path d="M3 3L14 0L27 5L29 22L22 29L6 28L1 16Z" fill="#37c884"/><path d="M16 29L27 12L30 26L24 30Z" fill="#f4ee4d"/><path d="M18 1L27 5L25 12Z" fill="#3fb8c9"/><rect x="5" y="6" width="19" height="19" fill="#111"/><text x="14" y="16" class="ide">PC</text><path d="M8 21H14" stroke="#fff" stroke-width="1.500"/></svg></button>
    <button class="run" aria-label="WebStorm"><svg width="30" height="30" viewBox="0 0 30 30"><path d="M1 3L15 1L29 6L27 24L21 29L6 27Z" fill="#18a6dd"/><path d="M14 1L22 0L28 10L20 8Z" fill="#e0f04d"/><rect x="5" y="6" width="19" height="19" fill="#111"/><text x="14" y="16" class="ide">WS</text><path d="M8 21H14" stroke="#fff" stroke-width="1.500"/></svg></button>
    <button class="run more2" aria-label="Typora"><svg width="28" height="28" viewBox="0 0 28 28"><path d="M2 1L12 2L27 2L26 14L27 26L14 26L1 27L3 14Z" fill="#ededed"/><text x="14" y="21" class="ty">T</text></svg></button>
    <button class="run" aria-label="笔记"><svg width="30" height="30" viewBox="0 0 30 30"><path d="M11 0H30V18Q30 30 15 30Q0 30 0 16Q0 0 11 0Z" fill="url(#gBlue)"/><path d="M17 5L24 13L17 20L8 22L9 13Z" fill="#fff"/></svg></button>
    <button class="run" aria-label="Camtasia"><svg width="30" height="30" viewBox="0 0 30 30"><rect width="30" height="30" rx="2" fill="#519a12"/><path d="M23 6H12L7 11V21L12 25H23" fill="none" stroke="#fff" stroke-width="5"/></svg></button>
    <button class="run front" aria-label="PowerPoint"><svg width="28" height="28" viewBox="0 0 28 28"><path d="M13 4H27V24H13Z" fill="#fff"/><circle cx="19" cy="10" r="4" fill="#d4502b"/><path d="M16 17H25M16 20H25" stroke="#d4502b" stroke-width="1.500"/><path d="M0 4L16 1V27L0 24Z" fill="#d24625"/><text x="8" y="19" class="pp">P</text></svg></button>
    <button class="run" aria-label="Camtasia 录制"><svg width="30" height="30" viewBox="0 0 30 30"><rect width="30" height="30" rx="2" fill="#f9623f"/><path d="M23 6H12L7 11V21L12 25H23" fill="none" stroke="#fff" stroke-width="5"/></svg></button>
  </div>
  <div class="tray">
    <button aria-label="显示隐藏的图标"><svg width="18" height="10" viewBox="0 0 18 10"><path d="M1 9L9 1L17 9" fill="none" stroke="#ddd" stroke-width="1.500"/></svg></button>
    <button aria-label="电源"><svg width="22" height="16" viewBox="0 0 22 16"><path d="M6 4H19V13H6ZM20 7H21V10" fill="none" stroke="#ddd" stroke-width="1.500"/><path d="M8 6H17V11H8Z" fill="#fff"/><path d="M1 1V4Q3 8 5 4V1ZM3 6V12H6" fill="none" stroke="#ddd" stroke-width="1.500"/></svg></button>
    <button aria-label="网络"><svg width="18" height="18" viewBox="0 0 18 18"><path d="M1 16Q2 3 17 1M5 16Q6 7 17 5M9 16Q10 10 17 9" fill="none" stroke="#ddd" stroke-width="1.500"/><circle cx="15" cy="15" r="2" fill="#ddd"/></svg></button>
    <button aria-label="音量"><svg width="22" height="18" viewBox="0 0 22 18"><path d="M1 6H4L8 2V16L4 12H1Z" fill="none" stroke="#ddd" stroke-width="1.500"/><path d="M11 6Q13 9 11 12M14 4Q17 9 14 14" fill="none" stroke="#ccc" stroke-width="1.500"/><path d="M17 1Q22 9 17 17" fill="none" stroke="#666"/></svg></button>
    <button class="ime-en">英</button>
    <button aria-label="搜狗输入法"><svg width="22" height="22"><use href="#sogou"/></svg></button>
    <button class="guard" aria-label="加速"><svg width="28" height="28" viewBox="0 0 28 28"><circle cx="14" cy="14" r="12.500" fill="#0b3524" stroke="#10b568" stroke-width="2"/><path d="M2 14H26A12 12 0 0 1 2 14Z" fill="#12bd6c"/><text x="14" y="19" class="ff">55</text></svg></button>
  </div>
</footer>
</div>

<div class="ime">
  <svg class="ime-logo" width="32" height="30"><use href="#sogou"/></svg>
  <div class="ime-bar">
    <button>英</button>
    <button aria-label="半角"><svg width="14" height="14" viewBox="0 0 14 14"><path d="M9 1Q16 7 9 12Q4 15 0 10Q10 11 9 1Z" fill="#1c6fc4"/></svg></button>
    <button aria-label="标点"><svg width="12" height="14" viewBox="0 0 12 14"><circle cx="3" cy="4" r="2" fill="#1c6fc4"/><path d="M9 6V9L7 12" fill="none" stroke="#1c6fc4" stroke-width="2"/></svg></button>
    <button aria-label="语音"><svg width="14" height="16" viewBox="0 0 14 16"><rect x="4" y="0" width="6" height="10" rx="3" fill="#1c6fc4"/><path d="M1 6Q1 12 7 12Q13 12 13 6M7 12V15M3 15H11" fill="none" stroke="#1c6fc4" stroke-width="1.500"/></svg></button>
    <button aria-label="键盘"><svg width="18" height="14" viewBox="0 0 18 14"><rect x="1" y="1" width="16" height="12" rx="2" fill="#dcebfa" stroke="#1c6fc4" stroke-width="2"/><path d="M4 4.500H14M4 7H14M5 10H13" stroke="#1c6fc4" stroke-dasharray="2 1"/></svg></button>
    <button aria-label="账户"><svg width="16" height="16" viewBox="0 0 16 16"><circle cx="7" cy="4" r="3" fill="#bbb"/><path d="M1 14Q2 7 7 8H10M7 9H15V15H7Z" fill="none" stroke="#bbb" stroke-width="2"/></svg></button>
    <button aria-label="皮肤"><svg width="16" height="14" viewBox="0 0 16 14"><path d="M0 3L5 0Q8 3 11 0L16 3L14 7L12 6V14H4V6L2 7Z" fill="#1c6fc4"/></svg></button>
    <button aria-label="工具"><svg width="16" height="16" viewBox="0 0 16 16"><path d="M2 14L9 7" stroke="#1c6fc4" stroke-width="4"/><path d="M14 5A4 4 0 1 1 10 1V5Z" fill="#1c6fc4"/></svg></button>
  </div>
</div>
<svg class="play" width="70" height="68" viewBox="0 0 70 68" role="img" aria-label="播放"><path d="M24 12L20 3M46 12L50 3" stroke="#fafafa" stroke-width="6" stroke-linecap="round"/><path d="M14 10H56Q68 11 68 23V52Q68 64 56 65H14Q2 64 2 52V23Q2 11 14 10Z" fill="#fafafa"/><path d="M26 27Q26 24 29 26L47 36Q50 38 47 40L29 51Q26 52 26 49Z" fill="#d9d9d9" stroke="#a8a8a8"/></svg>
</body>
</html>
```
FILE: styles.css
```css
* { box-sizing: border-box; }
body { margin: 0; background: #e6e6e6; color: #333; font: 15px/20px "Noto Sans CJK SC", sans-serif; }
button { display: flex; align-items: center; margin: 0; padding: 0; border: 0; background: none; color: inherit; font: inherit; white-space: nowrap; }
svg { flex: none; }
.defs { position: absolute; }
.app { display: flex; flex-direction: column; height: 100vh; overflow: hidden; }

/* title bar and tabs */
.top { background: #c15029; color: #fff; }
.titlebar { display: flex; height: 40px; }
.autosave { display: flex; align-items: center; gap: 4px; width: 137px; padding-left: 17px; color: #dc8a6b; position: relative; }
.switch { appearance: none; width: 48px; height: 20px; margin: 0; border: 1px solid #d27350; border-radius: 10px; background: radial-gradient(circle at 10px 9px, #e48c6d 5px, transparent 6px); }
.off { position: absolute; right: 15px; font-size: 12px; }
.qat { display: flex; padding-right: 264px; }
.qat button { width: 50px; justify-content: center; gap: 7px; }
.qat .wide { width: 60px; }
.qat .slim { width: 32px; }
.ctx-title { width: 72px; background: #9f4022; color: #e8b29b; display: flex; align-items: center; justify-content: center; }
.doc { margin: 0 0 0 127px; font: 15px/38px "Open Sans", "Noto Sans CJK SC", sans-serif; }
.winctl { display: flex; margin-left: auto; height: 32px; padding-right: 1px; }
.winctl button { width: 42px; justify-content: center; }
.login { color: #fff; text-decoration: none; line-height: 32px; margin-right: 36px; }
.tabs { display: flex; height: 38px; }
.tabs button { padding: 0 16px; }
.tabs .file { padding: 0 29px 0 26px; }
.tabs .active { background: #f1f1f1; color: #c8512b; }
.tabs .ctx { width: 72px; justify-content: center; background: #9f4022; margin-left: 4px; }
.tabs .tell { padding: 0 9px; gap: 5px; color: #f8dcd0; }
.tabs .share { margin-left: auto; gap: 9px; padding: 0 7px; }
.tabs .comment { padding: 0 18px 0 16px; }

/* ribbon */
.ribbon { display: flex; height: 127px; background: #f1f1f1; border-bottom: 1px solid #d8d8d8; }
.group { display: flex; flex-direction: column; border-right: 1px solid #dedede; padding-top: 4px; }
.g-clip { width: 157px; }
.g-slides { width: 150px; }
.g-font { width: 367px; }
.g-para { width: 402px; }
.g-draw { width: 505px; }
.g-edit { width: 95px; }
.body { display: flex; height: 99px; }
.cap { position: relative; text-align: center; color: #444; height: 23px; line-height: 24px; }
.g-clip .cap, .g-font .cap, .g-para .cap, .g-draw .cap { padding-right: 20px; }
.launch { position: absolute; right: 7px; top: 8px; }
.col { display: flex; flex-direction: column; }
.col button { height: 33px; gap: 5px; }
.col.tight button { height: 31px; gap: 3px; }
.col .far { margin-left: 6px; }
.dim { color: #b2b2b2; }
.big { flex-direction: column; justify-content: flex-start; padding-top: 5px; }
.big > svg:first-child { margin-bottom: 3px; }
.big > svg:last-child { margin-top: 8px; }
.split { border-top: 1px solid #ddd; width: 100%; }
.two { display: flex; align-items: center; gap: 6px; padding-left: 6px; }
.g-clip .big { width: 52px; margin: 0 12px 0 8px; }
.g-slides .body { padding-left: 4px; }
.g-slides .big { width: 60px; margin-right: 10px; }
.g-slides .col button { gap: 3px; }
.tools { display: flex; flex-direction: column; gap: 14px; padding-top: 13px; height: 99px; }
.line { display: flex; height: 29px; }
.line button { justify-content: center; }
.g-font .tools { padding-left: 4px; }
.c38 { width: 38px; }
.c42 { width: 42px; gap: 4px; }
.line .left { justify-content: flex-start; gap: 6px; }
.line.pad { padding-left: 7px; }
.line .on { background: #c6c6c6; }
.line .cols { width: 42px; gap: 6px; }
.g-para .tools { padding-left: 4px; width: 242px; }
.g-para .col button { gap: 4px; }
.combo { position: relative; border: 1px solid #e0e0e0; background: #fff; }
.combo select { appearance: none; width: 100%; height: 100%; border: 0; padding: 0 4px; background: none; color: #555; font: 15px/20px "Open Sans", "Noto Sans CJK SC", sans-serif; }
.combo svg { position: absolute; right: 3px; top: 12px; }
.combo.name { width: 189px; }
.combo.size { width: 54px; margin-right: 3px; }
.glyph { font: 19px/28px "Open Sans", sans-serif; color: #555; }
.glyph svg { align-self: flex-start; margin-top: 3px; }
.glyph.small { font-size: 16px; }
.line .f-b, .f-i, .f-u, .f-s { font: bold 18px/28px "Open Sans", sans-serif; color: #555; }
.line .f-i { font: italic bold 18px/28px "Liberation Serif", serif; }
.line .f-u { font-weight: 400; text-decoration: underline; }
.line .f-abc { font: 13px/28px "Open Sans", sans-serif; text-decoration: line-through; color: #777; }
.f-av span { display: flex; flex-direction: column; align-items: center; font: 16px/18px "Open Sans", sans-serif; color: #555; }
.f-aa span { font: 15px/28px "Open Sans", sans-serif; color: #555; }
.mini { font: 12px "Open Sans", sans-serif; fill: #666; }
.bigA { font: 18px "Open Sans", sans-serif; fill: #555; }
.tiny { font: 7px "Open Sans", sans-serif; fill: #3b73b9; }
.blueA { font: bold 16px "Open Sans", sans-serif; fill: #3b73b9; }
.ab { font: 12px "Open Sans", sans-serif; fill: #8a5bb0; }
.ac { font: 12px "Open Sans", sans-serif; fill: #3f74bc; }
.gallery { display: flex; width: 264px; height: 78px; margin: 5px 5px 0 4px; background: #fff; border: 1px solid #d6d6d6; }
.shapes { display: grid; grid-template-columns: repeat(6, 38px); place-items: center; border-right: 1px solid #ddd; fill: none; stroke: #8c8c8c; }
.tinyA { font: 7px "Open Sans", sans-serif; fill: #3b73b9; stroke: none; }
.midA { font: 12px "Open Sans", sans-serif; fill: #3b73b9; stroke: none; }
.more { flex: 1; justify-content: center; }
.arrange { width: 50px; }
.quick { width: 62px; margin: 0 5px; }
.g-edit .body { padding-left: 12px; }
.collapse { margin: auto 12px 6px auto; }

/* workspace */
.work { display: flex; flex: 1; min-height: 0; border-bottom: 3px solid #dcdcdc; overflow: hidden; }
.thumbs { display: flex; flex-direction: column; gap: 28px; width: 290px; margin: 0; padding: 0; list-style: none; border-right: 1px solid #d6d6d6; }
.thumbs li { display: flex; }
.thumbs .clipped { flex: none; }
.no { display: flex; flex-direction: column; align-items: center; gap: 8px; width: 47px; padding-right: 15px; font: 19px/12px "Open Sans", sans-serif; color: #555; }
.no svg { margin-left: 10px; }
.sel .no { color: #d35230; }
.thumb { width: 192px; height: 108px; display: block; }
.thumb.tail { height: 71px; }
.sel .thumb { outline: 2px solid #ec8f77; }
.stage { flex: 1; padding: 8px 126px 9px 124px; }
.slide { display: block; width: 100%; height: auto; aspect-ratio: 16 / 9; }
.scroll { width: 20px; height: 760px; background: #dadada; padding: 649px 1px 0; }
.grip { height: 20px; background: #fff; }
.tt { font: bold 52px "Noto Sans CJK SC", sans-serif; fill: #fff; }
.tb { font: 25px "Noto Sans CJK SC", sans-serif; fill: #fff; }
.s22 { font-size: 22px; }
.s20 { font-size: 20px; }
.bold { font-weight: bold; }
.gold { fill: #e0a030; }
.code { font: 14px "Liberation Mono", "Noto Sans CJK SC", monospace; fill: #8a7a70; }
.mid { text-anchor: middle; font-size: 40px; }
.logo-text { font: 16px "Open Sans", sans-serif; fill: #fff; text-anchor: middle; }
.note { font: 22px "Open Sans", sans-serif; font-variant-numeric: oldstyle-nums; fill: #e6ecf5; }
.num { font: 26px "Open Sans", sans-serif; fill: #fff; text-anchor: middle; }
.cell { fill: #44a42f; stroke: #2c8a86; stroke-width: 2; }
.hot { fill: #d01400; stroke: #8a4048; }

/* status bar */
.status { display: flex; height: 39px; background: #f2f2f2; padding-left: 7px; font: 15px/20px "Open Sans", "Noto Sans CJK SC", sans-serif; color: #444; }
.count { line-height: 38px; width: 200px; white-space: nowrap; }
.lang { margin-left: 17px; }
.notes { gap: 7px; margin-left: auto; }
.view { width: 38px; justify-content: center; }
.notes + .view { margin-left: 18px; }
.cur { background: #c8c8c8; }
.minus { margin-left: 14px; }
.zoom { appearance: none; width: 102px; margin: 0 42px 0 6px; background: linear-gradient(#aaa, #aaa) center / 100% 1px no-repeat; }
.zoom::-webkit-slider-thumb { appearance: none; width: 8px; height: 16px; background: #555; }
.fit { margin: 0 14px 0 12px; }

/* taskbar */
.taskbar { display: flex; height: 50px; background: #000; color: #fff; }
.sys { width: 60px; justify-content: center; }
.apps { display: flex; padding-left: 3px; }
.apps button { width: 62px; justify-content: center; position: relative; }
.apps .run::after { content: ""; position: absolute; left: 6px; right: 6px; bottom: 0; height: 3px; background: #76a9dc; }
.apps .more2::after { background: linear-gradient(90deg, #76a9dc 80%, #4a6c90 80%); }
.apps .front { background: #4a4a4a; }
.apps .front::after { left: 0; right: 0; }
.yd { font: bold 12px "Noto Sans CJK SC", sans-serif; fill: #fff; text-anchor: middle; }
.ide { font: bold 10px "Open Sans", sans-serif; fill: #fff; text-anchor: middle; }
.ty { font: 19px "Open Sans", sans-serif; fill: #444; text-anchor: middle; }
.pp { font: bold 14px "Open Sans", sans-serif; fill: #fff; text-anchor: middle; }
.ff { font: 14px "Open Sans", sans-serif; fill: #fff; text-anchor: middle; }
.tray { display: flex; margin-left: auto; padding-right: 6px; }
.tray button { width: 38px; justify-content: center; }
.tray .guard { width: 46px; border-right: 1px solid #444; }
.ime-en { font-weight: bold; }

/* floating overlays */
.ime { position: absolute; right: 0; bottom: 50px; display: flex; align-items: flex-end; }
.ime-logo { margin-right: -2px; z-index: 1; }
.ime-bar { display: flex; height: 25px; background: #fbfcfe; border: 1px solid #d5dce6; }
.ime-bar button { width: 22px; justify-content: center; color: #1c6fc4; font-weight: bold; }
.play { position: absolute; right: 47px; bottom: 139px; filter: drop-shadow(0 1px 2px #9a9a9a); overflow: visible; }
```
